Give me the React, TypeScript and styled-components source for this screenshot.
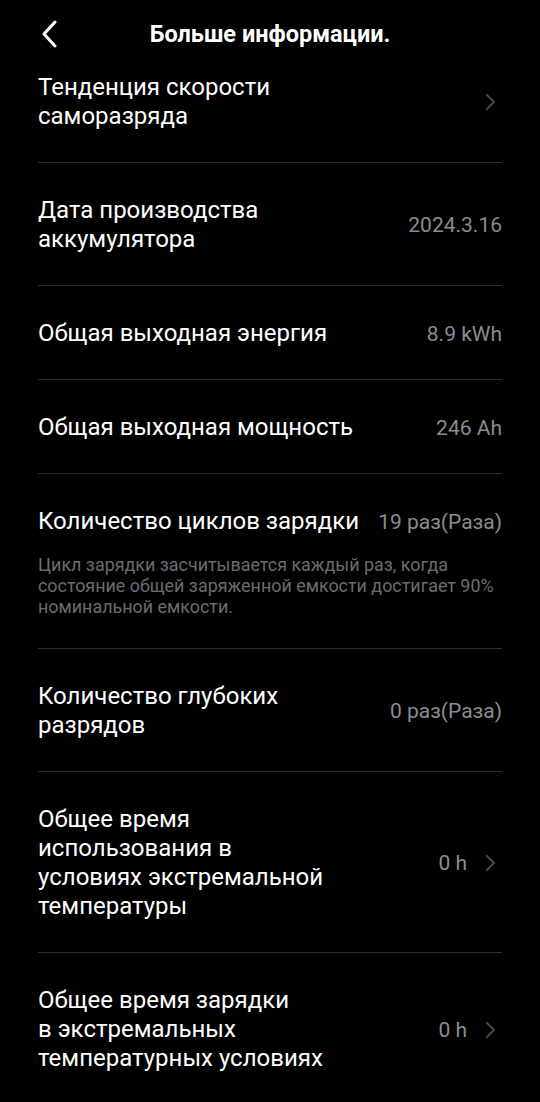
import React from "react";
import styled, { createGlobalStyle } from "styled-components";

const GlobalStyle = createGlobalStyle`
  html, body {
    margin: 0;
    padding: 0;
    background: #000;
  }
  body {
    font-family: Roboto, "Noto Sans", "Liberation Sans", sans-serif;
    -webkit-font-smoothing: antialiased;
  }
`;

const Screen = styled.div`
  width: 540px;
  min-height: 1102px;
  background: #000;
  color: #fff;
  overflow: hidden;
`;

const Header = styled.header`
  position: relative;
  height: 68px;
  display: flex;
  align-items: center;
  justify-content: center;
`;

const BackButton = styled.button`
  position: absolute;
  left: 36px;
  top: 16px;
  width: 28px;
  height: 36px;
  padding: 0;
  border: none;
  background: none;
  display: flex;
  align-items: center;
  justify-content: center;
`;

const Title = styled.h1`
  margin: 0;
  font-size: 23.5px;
  font-weight: 700;
  color: #fff;
`;

const List = styled.div`
  padding: 0 38px;
`;

const Row = styled.div<{ $first?: boolean }>`
  padding: ${(p) => (p.$first ? "5px" : "33px")} 0 31px;
  border-bottom: 1px solid #2c2c2e;
`;

const RowMain = styled.div`
  display: flex;
  align-items: center;
  justify-content: space-between;
  gap: 16px;
`;

const Label = styled.div<{ $width: number }>`
  font-size: 24px;
  line-height: 29px;
  color: #fff;
  max-width: ${(p) => p.$width}px;
`;

const ValueGroup = styled.div`
  display: flex;
  align-items: center;
  flex-shrink: 0;
`;

const Value = styled.span`
  font-size: 21px;
  color: #8b8b92;
  white-space: nowrap;
`;

const Chevron = styled.svg`
  margin-left: 18px;
  margin-right: 5px;
`;

const Note = styled.p`
  margin: 18px 0 0;
  font-size: 17.9px;
  line-height: 21px;
  color: #6b6b70;
`;

const BackIcon = () => (
  <svg width="18" height="28" viewBox="0 0 18 28">
    <polyline
      points="14,2 3,14 14,26"
      fill="none"
      stroke="#fff"
      strokeWidth="3"
      strokeLinecap="round"
      strokeLinejoin="round"
    />
  </svg>
);

const ChevronIcon = () => (
  <Chevron width="12" height="18" viewBox="0 0 12 18">
    <polyline
      points="2,2 9,9 2,16"
      fill="none"
      stroke="#46464a"
      strokeWidth="2.2"
      strokeLinecap="round"
      strokeLinejoin="round"
    />
  </Chevron>
);

type Item = {
  label: string;
  value?: string;
  chevron?: boolean;
  note?: string;
  width?: number;
};

const items: Item[] = [
  { label: "Тенденция скорости саморазряда", chevron: true },
  { label: "Дата производства аккумулятора", value: "2024.3.16" },
  { label: "Общая выходная энергия", value: "8.9 kWh" },
  { label: "Общая выходная мощность", value: "246 Ah" },
  {
    label: "Количество циклов зарядки",
    value: "19 раз(Раза)",
    note:
      "Цикл зарядки засчитывается каждый раз, когда состояние общей заряженной емкости достигает 90% номинальной емкости.",
  },
  { label: "Количество глубоких разрядов", value: "0 раз(Раза)" },
  {
    label: "Общее время использования в условиях экстремальной температуры",
    value: "0 h",
    chevron: true,
    width: 295,
  },
  {
    label: "Общее время зарядки в\u00a0экстремальных температурных условиях",
    value: "0 h",
    chevron: true,
    width: 295,
  },
];

export default function App() {
  return (
    <Screen>
      <GlobalStyle />
      <Header>
        <BackButton aria-label="Назад">
          <BackIcon />
        </BackButton>
        <Title>Больше информации.</Title>
      </Header>
      <List>
        {items.map((item, i) => (
          <Row key={item.label} $first={i === 0}>
            <RowMain>
              <Label $width={item.width ?? 332}>{item.label}</Label>
              <ValueGroup>
                {item.value && <Value>{item.value}</Value>}
                {item.chevron && <ChevronIcon />}
              </ValueGroup>
            </RowMain>
            {item.note && <Note>{item.note}</Note>}
          </Row>
        ))}
      </List>
    </Screen>
  );
}
